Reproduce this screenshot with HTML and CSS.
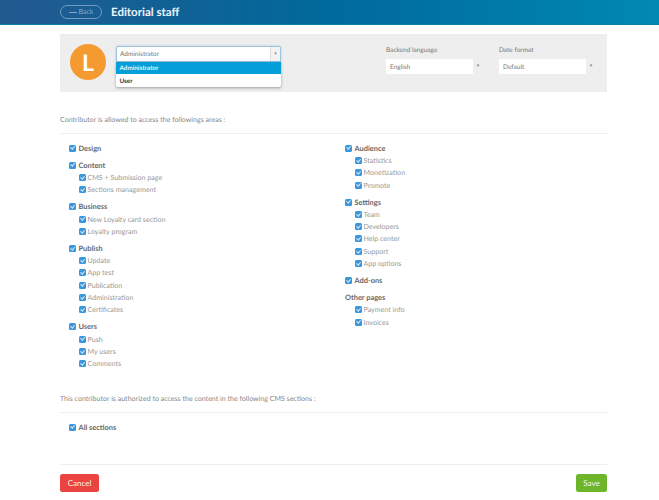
FILE: index.html
```html
<!DOCTYPE html>
<html lang="en">
<head>
    <meta charset="UTF-8">
    <meta name="viewport" content="width=device-width, initial-scale=1.0">
    <title>Editorial staff</title>
    <link rel="stylesheet" href="styles.css">
</head>
<body>
    <header class="topbar">
        <a class="back" href="#"><span class="back-arrow"></span>Back</a>
        <h1>Editorial staff</h1>
    </header>

    <main class="page">
        <section class="panel">
            <div class="avatar">L</div>
            <div class="role">
                <div class="select select-open">
                    <span class="select-value">Administrator</span>
                    <span class="select-arrow">&#9662;</span>
                </div>
                <ul class="options">
                    <li class="option-active">Administrator</li>
                    <li>User</li>
                </ul>
            </div>
            <div class="field field-lang">
                <label>Backend language</label>
                <div class="select-row">
                    <span class="select-value">English</span>
                    <span class="select-arrow">&#9662;</span>
                </div>
            </div>
            <div class="field">
                <label>Date format</label>
                <div class="select-row">
                    <span class="select-value">Default</span>
                    <span class="select-arrow">&#9662;</span>
                </div>
            </div>
        </section>

        <p class="intro">Contributor is allowed to access the followings areas :</p>

        <div class="areas">
            <div class="col">
                <div class="group">
                    <label class="check main"><input type="checkbox" checked>Design</label>
                </div>
                <div class="group">
                    <label class="check main"><input type="checkbox" checked>Content</label>
                    <label class="check sub"><input type="checkbox" checked>CMS + Submission page</label>
                    <label class="check sub"><input type="checkbox" checked>Sections management</label>
                </div>
                <div class="group">
                    <label class="check main"><input type="checkbox" checked>Business</label>
                    <label class="check sub"><input type="checkbox" checked>New Loyalty card section</label>
                    <label class="check sub"><input type="checkbox" checked>Loyalty program</label>
                </div>
                <div class="group">
                    <label class="check main"><input type="checkbox" checked>Publish</label>
                    <label class="check sub"><input type="checkbox" checked>Update</label>
                    <label class="check sub"><input type="checkbox" checked>App test</label>
                    <label class="check sub"><input type="checkbox" checked>Publication</label>
                    <label class="check sub"><input type="checkbox" checked>Administration</label>
                    <label class="check sub"><input type="checkbox" checked>Certificates</label>
                </div>
                <div class="group">
                    <label class="check main"><input type="checkbox" checked>Users</label>
                    <label class="check sub"><input type="checkbox" checked>Push</label>
                    <label class="check sub"><input type="checkbox" checked>My users</label>
                    <label class="check sub"><input type="checkbox" checked>Comments</label>
                </div>
            </div>
            <div class="col">
                <div class="group">
                    <label class="check main"><input type="checkbox" checked>Audience</label>
                    <label class="check sub"><input type="checkbox" checked>Statistics</label>
                    <label class="check sub"><input type="checkbox" checked>Monetization</label>
                    <label class="check sub"><input type="checkbox" checked>Promote</label>
                </div>
                <div class="group">
                    <label class="check main"><input type="checkbox" checked>Settings</label>
                    <label class="check sub"><input type="checkbox" checked>Team</label>
                    <label class="check sub"><input type="checkbox" checked>Developers</label>
                    <label class="check sub"><input type="checkbox" checked>Help center</label>
                    <label class="check sub"><input type="checkbox" checked>Support</label>
                    <label class="check sub"><input type="checkbox" checked>App options</label>
                </div>
                <div class="group">
                    <label class="check main"><input type="checkbox" checked>Add-ons</label>
                </div>
                <div class="group">
                    <div class="check main no-box">Other pages</div>
                    <label class="check sub"><input type="checkbox" checked>Payment info</label>
                    <label class="check sub"><input type="checkbox" checked>Invoices</label>
                </div>
            </div>
        </div>

        <p class="intro intro-cms">This contributor is authorized to access the content in the following CMS sections :</p>

        <div class="all-sections">
            <label class="check main"><input type="checkbox" checked>All sections</label>
        </div>

        <footer class="actions">
            <button class="btn btn-cancel" type="button">Cancel</button>
            <button class="btn btn-save" type="button">Save</button>
        </footer>
    </main>
</body>
</html>
```

FILE: styles.css
```css
* { box-sizing: border-box; }
html, body { height: 500px; overflow: hidden; }
body { margin: 0; font-family: Lato, "Open Sans", sans-serif; color: #555; background: #fff; text-rendering: geometricPrecision; }

.topbar { height: 25px; display: flex; align-items: center; padding-left: 60px; background: linear-gradient(90deg, #22598f 0%, #00699b 50%, #0089b3 100%); border-bottom: 1px solid #0a7fa8; }
.back { width: 42px; height: 14px; margin-right: 9px; display: flex; align-items: center; justify-content: center; gap: 2px; border: 1px solid #6f9cc0; border-radius: 8px; color: #86abc9; font-size: 7px; text-decoration: none; }
.back-arrow { width: 8px; height: 1px; background: #86abc9; }
.topbar h1 { margin: 0; color: #eef4f8; font-size: 11.5px; font-weight: 700; }

.page { width: 547px; margin-left: 60px; }

.panel { position: relative; height: 58px; margin-top: 9px; display: flex; background: #eeeeee; }
.avatar { width: 36px; height: 36px; margin: 10px 0 0 10px; border-radius: 50%; background: #f59a31; color: #fff; font-size: 23px; font-weight: 700; line-height: 36px; text-align: center; }
.role { position: relative; width: 165px; margin: 12px 0 0 10px; }
.select { height: 16px; display: flex; background: #fff; border: 1px solid #9cc4de; border-radius: 2px 2px 0 0; box-shadow: 0 0 2px rgba(80, 150, 200, .5); }
.select-value { flex: 1; padding-left: 3px; font-size: 6.5px; line-height: 16px; color: #777; }
.select-arrow { width: 10px; border-left: 1px solid #ddd; background: #f3f3f3; color: #888; font-size: 5px; line-height: 14px; text-align: center; }
.options { position: absolute; top: 16px; left: 0; width: 165px; margin: 0; padding: 0; list-style: none; background: #fff; box-shadow: 0 1px 3px rgba(0, 0, 0, .35); border-radius: 0 0 2px 2px; }
.options li { height: 13px; padding-left: 3.5px; font-size: 6.3px; font-weight: 700; line-height: 15px; color: #333; }
.options .option-active { height: 12px; line-height: 14px; background: #049fd9; color: #eaf6fb; }

.field { width: 97px; margin: 11px 0 0 16px; }
.field-lang { margin-left: 105px; }
.field label { display: block; height: 14px; font-size: 6.5px; line-height: 11px; color: #777; }
.select-row { height: 15px; display: flex; background: #fff; }
.select-row .select-value { width: 87px; flex: none; padding-left: 4px; font-size: 6.5px; line-height: 17px; background: #fff; }
.select-row .select-arrow { flex: 1; border: 0; background: #eee; line-height: 15px; }

.intro { height: 20px; margin: 22px 0 0; font-size: 7.05px; line-height: 12px; color: #888; border-bottom: 1px solid #eee; }
.intro-cms { margin-top: 0; }

.areas { height: 259px; padding: 8px 0 0 9px; display: flex; }
.col { width: 276px; flex: none; }
.group { margin-bottom: 4.7px; }

.check { display: flex; align-items: center; height: 12.3px; }
.check input { appearance: none; width: 7px; height: 7px; margin: 0 2.5px 0 0; flex: none; border-radius: 1.5px; background: #3b97dc; position: relative; }
.check input::after { content: ""; position: absolute; left: 2.3px; top: .8px; width: 1.6px; height: 3.4px; border: solid #dcecf7; border-width: 0 1px 1px 0; transform: rotate(40deg); }
.main { font-size: 7.4px; font-weight: 700; color: #666; }
.sub { padding-left: 10px; font-size: 7.1px; color: #999; }
.sub input { margin-right: 1.5px; }
.no-box { font-weight: 700; }

.all-sections { height: 52px; padding: 8px 0 0 9px; border-bottom: 1px solid #eee; }

.actions { display: flex; justify-content: space-between; margin-top: 9px; }
.btn { height: 18px; padding: 0; border: 0; border-radius: 2.5px; color: #f4f4f4; font-family: inherit; font-size: 8px; }
.btn-cancel { width: 39px; background: #ea4340; }
.btn-save { width: 31px; background: #6fb52c; }
```
